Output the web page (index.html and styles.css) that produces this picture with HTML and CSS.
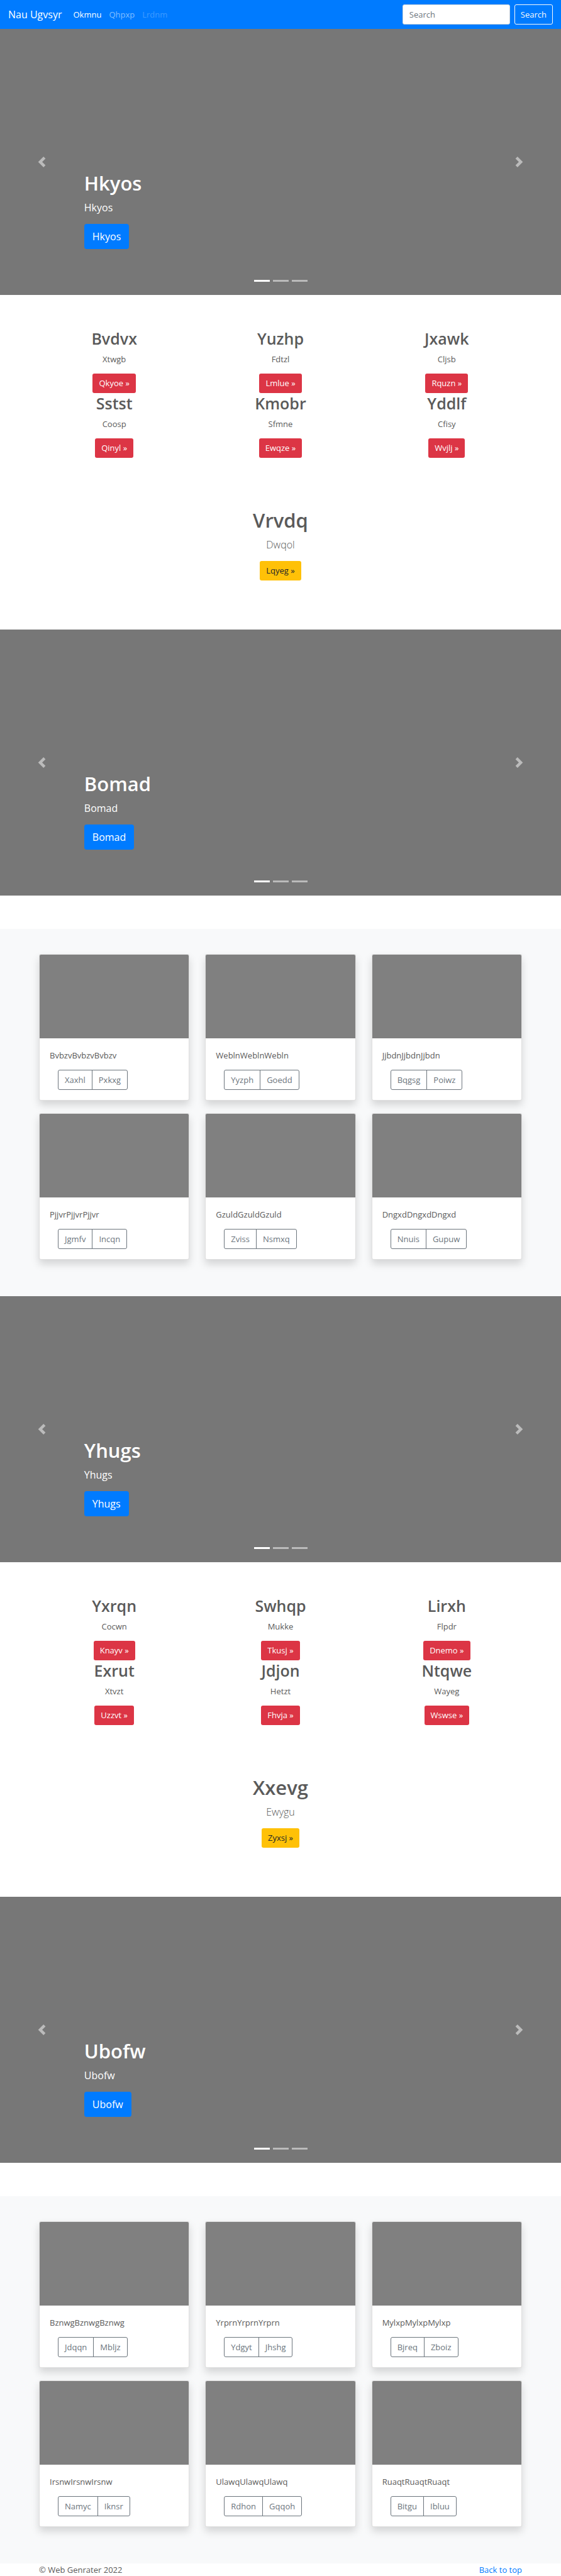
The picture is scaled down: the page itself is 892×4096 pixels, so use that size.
FILE: index.html
```
<!DOCTYPE html>
<html lang="en">
<head>
<meta charset="utf-8">
<meta name="viewport" content="width=device-width, initial-scale=1">
<title>Nau Ugvsyr</title>
<link rel="stylesheet" href="styles.css">
</head>
<body>
<header class="navbar" id="top">
  <a class="brand" href="#">Nau Ugvsyr</a>
  <nav class="nav-links">
    <a class="nav-link active" href="#">Okmnu</a>
    <a class="nav-link" href="#">Qhpxp</a>
    <a class="nav-link disabled" href="#">Lrdnm</a>
  </nav>
  <form class="search">
    <input class="search-input" type="text" placeholder="Search" aria-label="Search">
    <button class="search-btn" type="button">Search</button>
  </form>
</header>

<main>
  <section class="carousel">
    <button class="control" type="button" aria-label="Previous"><svg class="chevron" viewBox="0 0 8 8"><path d="M5.25 0l-4 4 4 4 1.5-1.5L4.25 4l2.5-2.5L5.25 0z"/></svg></button>
    <div class="caption">
      <h1 class="title">Hkyos</h1>
      <p class="subtitle">Hkyos</p>
      <a class="btn btn-primary" href="#">Hkyos</a>
    </div>
    <button class="control" type="button" aria-label="Next"><svg class="chevron" viewBox="0 0 8 8"><path d="M2.75 0l-1.5 1.5L3.75 4l-2.5 2.5L2.75 8l4-4-4-4z"/></svg></button>
    <div class="indicators"><span class="dot current"></span><span class="dot"></span><span class="dot"></span></div>
  </section>

  <section class="features">
    <div class="container feature-grid">
      <div class="feature"><h2 class="feature-title">Bvdvx</h2><p class="feature-text">Xtwgb</p><a class="btn btn-danger" href="#">Qkyoe »</a></div>
      <div class="feature"><h2 class="feature-title">Yuzhp</h2><p class="feature-text">Fdtzl</p><a class="btn btn-danger" href="#">Lmlue »</a></div>
      <div class="feature"><h2 class="feature-title">Jxawk</h2><p class="feature-text">Cljsb</p><a class="btn btn-danger" href="#">Rquzn »</a></div>
      <div class="feature"><h2 class="feature-title">Sstst</h2><p class="feature-text">Coosp</p><a class="btn btn-danger" href="#">Qinyl »</a></div>
      <div class="feature"><h2 class="feature-title">Kmobr</h2><p class="feature-text">Sfmne</p><a class="btn btn-danger" href="#">Ewqze »</a></div>
      <div class="feature"><h2 class="feature-title">Yddlf</h2><p class="feature-text">Cfisy</p><a class="btn btn-danger" href="#">Wvjlj »</a></div>
    </div>
    <div class="jumbo">
      <h1 class="title">Vrvdq</h1>
      <p class="lead">Dwqol</p>
      <a class="btn btn-warning" href="#">Lqyeg »</a>
    </div>
  </section>

  <section class="carousel spaced">
    <button class="control" type="button" aria-label="Previous"><svg class="chevron" viewBox="0 0 8 8"><path d="M5.25 0l-4 4 4 4 1.5-1.5L4.25 4l2.5-2.5L5.25 0z"/></svg></button>
    <div class="caption">
      <h1 class="title">Bomad</h1>
      <p class="subtitle">Bomad</p>
      <a class="btn btn-primary" href="#">Bomad</a>
    </div>
    <button class="control" type="button" aria-label="Next"><svg class="chevron" viewBox="0 0 8 8"><path d="M2.75 0l-1.5 1.5L3.75 4l-2.5 2.5L2.75 8l4-4-4-4z"/></svg></button>
    <div class="indicators"><span class="dot current"></span><span class="dot"></span><span class="dot"></span></div>
  </section>

  <section class="album">
    <div class="container card-grid">
      <article class="card"><div class="thumb"></div><div class="card-body"><p class="card-text">BvbzvBvbzvBvbzv</p><div class="btn-group"><button class="group-btn" type="button">Xaxhl</button><button class="group-btn" type="button">Pxkxg</button></div></div></article>
      <article class="card"><div class="thumb"></div><div class="card-body"><p class="card-text">WeblnWeblnWebln</p><div class="btn-group"><button class="group-btn" type="button">Yyzph</button><button class="group-btn" type="button">Goedd</button></div></div></article>
      <article class="card"><div class="thumb"></div><div class="card-body"><p class="card-text">JjbdnJjbdnJjbdn</p><div class="btn-group"><button class="group-btn" type="button">Bqgsg</button><button class="group-btn" type="button">Poiwz</button></div></div></article>
      <article class="card"><div class="thumb"></div><div class="card-body"><p class="card-text">PjjvrPjjvrPjjvr</p><div class="btn-group"><button class="group-btn" type="button">Jgmfv</button><button class="group-btn" type="button">Incqn</button></div></div></article>
      <article class="card"><div class="thumb"></div><div class="card-body"><p class="card-text">GzuldGzuldGzuld</p><div class="btn-group"><button class="group-btn" type="button">Zviss</button><button class="group-btn" type="button">Nsmxq</button></div></div></article>
      <article class="card"><div class="thumb"></div><div class="card-body"><p class="card-text">DngxdDngxdDngxd</p><div class="btn-group"><button class="group-btn" type="button">Nnuis</button><button class="group-btn" type="button">Gupuw</button></div></div></article>
    </div>
  </section>

  <section class="carousel">
    <button class="control" type="button" aria-label="Previous"><svg class="chevron" viewBox="0 0 8 8"><path d="M5.25 0l-4 4 4 4 1.5-1.5L4.25 4l2.5-2.5L5.25 0z"/></svg></button>
    <div class="caption">
      <h1 class="title">Yhugs</h1>
      <p class="subtitle">Yhugs</p>
      <a class="btn btn-primary" href="#">Yhugs</a>
    </div>
    <button class="control" type="button" aria-label="Next"><svg class="chevron" viewBox="0 0 8 8"><path d="M2.75 0l-1.5 1.5L3.75 4l-2.5 2.5L2.75 8l4-4-4-4z"/></svg></button>
    <div class="indicators"><span class="dot current"></span><span class="dot"></span><span class="dot"></span></div>
  </section>

  <section class="features">
    <div class="container feature-grid">
      <div class="feature"><h2 class="feature-title">Yxrqn</h2><p class="feature-text">Cocwn</p><a class="btn btn-danger" href="#">Knayv »</a></div>
      <div class="feature"><h2 class="feature-title">Swhqp</h2><p class="feature-text">Mukke</p><a class="btn btn-danger" href="#">Tkusj »</a></div>
      <div class="feature"><h2 class="feature-title">Lirxh</h2><p class="feature-text">Flpdr</p><a class="btn btn-danger" href="#">Dnemo »</a></div>
      <div class="feature"><h2 class="feature-title">Exrut</h2><p class="feature-text">Xtvzt</p><a class="btn btn-danger" href="#">Uzzvt »</a></div>
      <div class="feature"><h2 class="feature-title">Jdjon</h2><p class="feature-text">Hetzt</p><a class="btn btn-danger" href="#">Fhvja »</a></div>
      <div class="feature"><h2 class="feature-title">Ntqwe</h2><p class="feature-text">Wayeg</p><a class="btn btn-danger" href="#">Wswse »</a></div>
    </div>
    <div class="jumbo">
      <h1 class="title">Xxevg</h1>
      <p class="lead">Ewygu</p>
      <a class="btn btn-warning" href="#">Zyxsj »</a>
    </div>
  </section>

  <section class="carousel spaced">
    <button class="control" type="button" aria-label="Previous"><svg class="chevron" viewBox="0 0 8 8"><path d="M5.25 0l-4 4 4 4 1.5-1.5L4.25 4l2.5-2.5L5.25 0z"/></svg></button>
    <div class="caption">
      <h1 class="title">Ubofw</h1>
      <p class="subtitle">Ubofw</p>
      <a class="btn btn-primary" href="#">Ubofw</a>
    </div>
    <button class="control" type="button" aria-label="Next"><svg class="chevron" viewBox="0 0 8 8"><path d="M2.75 0l-1.5 1.5L3.75 4l-2.5 2.5L2.75 8l4-4-4-4z"/></svg></button>
    <div class="indicators"><span class="dot current"></span><span class="dot"></span><span class="dot"></span></div>
  </section>

  <section class="album">
    <div class="container card-grid">
      <article class="card"><div class="thumb"></div><div class="card-body"><p class="card-text">BznwgBznwgBznwg</p><div class="btn-group"><button class="group-btn" type="button">Jdqqn</button><button class="group-btn" type="button">Mbljz</button></div></div></article>
      <article class="card"><div class="thumb"></div><div class="card-body"><p class="card-text">YrprnYrprnYrprn</p><div class="btn-group"><button class="group-btn" type="button">Ydgyt</button><button class="group-btn" type="button">Jhshg</button></div></div></article>
      <article class="card"><div class="thumb"></div><div class="card-body"><p class="card-text">MylxpMylxpMylxp</p><div class="btn-group"><button class="group-btn" type="button">Bjreq</button><button class="group-btn" type="button">Zboiz</button></div></div></article>
      <article class="card"><div class="thumb"></div><div class="card-body"><p class="card-text">IrsnwIrsnwIrsnw</p><div class="btn-group"><button class="group-btn" type="button">Namyc</button><button class="group-btn" type="button">Iknsr</button></div></div></article>
      <article class="card"><div class="thumb"></div><div class="card-body"><p class="card-text">UlawqUlawqUlawq</p><div class="btn-group"><button class="group-btn" type="button">Rdhon</button><button class="group-btn" type="button">Gqqoh</button></div></div></article>
      <article class="card"><div class="thumb"></div><div class="card-body"><p class="card-text">RuaqtRuaqtRuaqt</p><div class="btn-group"><button class="group-btn" type="button">Bitgu</button><button class="group-btn" type="button">Ibluu</button></div></div></article>
    </div>
  </section>
</main>

<footer class="container footer">
  <p class="copyright">© Web Genrater 2022</p>
  <a class="top-link" href="#top">Back to top</a>
</footer>
</body>
</html>
```
FILE: styles.css
```
*, *::before, *::after { box-sizing: border-box; }

body {
  margin: 0;
  background: #fff;
  color: #5a5a5a;
  font-family: "Open Sans", "Noto Sans", sans-serif;
  font-size: 13px;
  line-height: 20px;
}

h1, h2, p { margin: 0; }
a { color: #007bff; text-decoration: none; }
button, input { font: inherit; margin: 0; }

.container {
  max-width: 768px;
  margin: 0 auto;
}

/* Navigation bar */
.navbar {
  display: flex;
  align-items: center;
  padding: 7px 13px;
  background: #007bff;
}
.brand { color: #fff; font-size: 16px; margin-right: 12px; }
.nav-links { display: flex; flex: 1; }
.nav-link { padding: 6px; color: rgba(255, 255, 255, .5); }
.nav-link.active { color: #fff; }
.nav-link.disabled { color: rgba(255, 255, 255, .25); }
.search { display: flex; gap: 7px; }
.search-input {
  width: 171px;
  height: 32px;
  padding: 5px 10px;
  border: 1px solid #ced4da;
  border-radius: 3px;
  background: #fff;
  color: #495057;
}
.search-input::placeholder { color: #6c757d; opacity: 1; }
.search-btn {
  height: 32px;
  padding: 5px 9px;
  border: 1px solid #f8f9fa;
  border-radius: 3px;
  background: transparent;
  color: #f8f9fa;
}

/* Buttons */
.btn {
  display: inline-block;
  padding: 6px 10px;
  border-radius: 3px;
  line-height: 19px;
  color: #fff;
}
.btn-primary {
  padding: 8px 13px;
  border-radius: 4px;
  background: #007bff;
  font-size: 16px;
  line-height: 24px;
}
.btn-danger { background: #dc3545; }
.btn-warning { background: #ffc107; color: #212529; }

.title {
  margin-bottom: 7px;
  font-size: 31px;
  line-height: 40px;
  font-weight: 600;
}

/* Carousel */
.carousel {
  position: relative;
  display: grid;
  grid-template-columns: 15% 1fr 15%;
  min-height: 423px;
  background: #777;
}
.carousel.spaced { margin-bottom: 53px; }
.control {
  display: flex;
  align-items: center;
  justify-content: center;
  padding: 0;
  border: 0;
  background: none;
  opacity: .5;
}
.chevron { width: 17px; height: 17px; fill: #fff; }
.caption {
  display: flex;
  flex-direction: column;
  align-items: flex-start;
  justify-content: flex-end;
  padding-bottom: 73px;
  color: #fff;
}
.subtitle { margin-bottom: 13px; font-size: 16px; line-height: 25px; }
.indicators {
  position: absolute;
  left: 0;
  right: 0;
  bottom: 21px;
  display: flex;
  justify-content: center;
  gap: 5px;
}
.dot { width: 25px; height: 3px; background: #fff; opacity: .5; }
.dot.current { opacity: 1; }

/* Feature columns */
.features { padding: 53px 0 78px; text-align: center; }
.feature-grid {
  display: grid;
  grid-template-columns: repeat(3, 1fr);
  column-gap: 25px;
}
.feature, .jumbo {
  display: flex;
  flex-direction: column;
  align-items: center;
}
.feature-title {
  margin-bottom: 7px;
  font-size: 25px;
  line-height: 32px;
  font-weight: 600;
}
.feature-text { margin-bottom: 13px; }
.jumbo { margin-top: 79px; }
.lead { margin-bottom: 13px; font-size: 16px; line-height: 25px; font-weight: 300; }

/* Card album */
.album { padding: 40px 0 58px; background: #f8f9fa; }
.card-grid {
  display: grid;
  grid-template-columns: repeat(3, 1fr);
  gap: 20px 25px;
}
.card {
  overflow: hidden;
  border: 1px solid rgba(0, 0, 0, .125);
  border-radius: 3px;
  background: #fff;
  box-shadow: 0 7px 13px rgba(0, 0, 0, .15);
}
.thumb { height: 133px; background: #808080; }
.card-body { padding: 16px; }
.card-text { margin-bottom: 12px; line-height: 22px; }
.btn-group { display: flex; padding-left: 13px; }
.group-btn {
  height: 32px;
  padding: 5px 10px;
  border: 1px solid #6c757d;
  background: transparent;
  color: #6c757d;
}
.group-btn:first-child { border-radius: 3px 0 0 3px; }
.group-btn:last-child { margin-left: -1px; border-radius: 0 3px 3px 0; }

/* Footer */
.footer { display: flex; justify-content: space-between; }
```
